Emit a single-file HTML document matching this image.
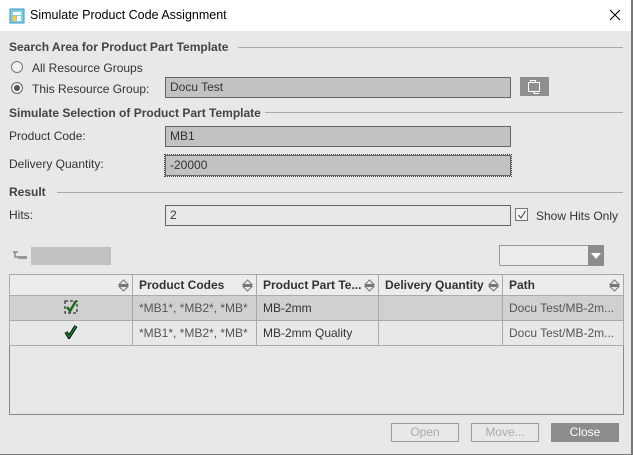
<!DOCTYPE html>
<html><head><style>
*{margin:0;padding:0;box-sizing:border-box}
body{width:633px;height:455px;overflow:hidden;background:#e8e8e8;font-family:"Liberation Sans",sans-serif;font-size:12px;color:#333;position:relative}
.a{position:absolute;white-space:nowrap}
.b{font-weight:bold;color:#444}
.line{position:absolute;height:1px;background:#aaa}
.f{position:absolute;background:#c2c2c2;border:1px solid #666;padding:2px 4px;line-height:14px}
.radio{position:absolute;width:12px;height:12px;border:1px solid #777;border-radius:50%;background:#f2f2f2}
.btn{position:absolute;width:68px;height:19px;border:1px solid #999;color:#aaa;text-align:center;line-height:17px}
table{position:absolute;left:9px;top:274px;border-collapse:collapse;font-size:12px}
td,th{border:1px solid #aaa;height:25px;padding:0 6px;white-space:nowrap;overflow:hidden}
th{height:21px;text-align:left;color:#333;position:relative;background:#ececec}
.s{position:absolute;right:3px;top:4px}
</style></head><body>
<div class="a" style="left:0;top:0;width:633px;height:31px;background:#fff"></div>
<div class="a" style="left:631px;top:0;width:2px;height:455px;background:#777"></div>
<div class="a" style="left:0;top:454px;width:633px;height:1px;background:#777"></div>
<svg class="a" style="left:9px;top:8px" width="16" height="16"><rect x="1" y="1" width="14" height="14" fill="#8cd" stroke="#39c"/><rect x="4" y="4" width="8" height="3" fill="#fff"/><rect x="4" y="8" width="3" height="5" fill="#fc3"/><rect x="8" y="8" width="4" height="5" fill="#fff"/></svg>
<div class="a" style="left:30px;top:8px;font-size:12.5px;color:#000">Simulate Product Code Assignment</div>
<svg class="a" style="left:609px;top:9px" width="12" height="12"><path d="M1 1L11 11M11 1L1 11" stroke="#000" stroke-width="1.1"/></svg>

<div class="a b" style="left:9px;top:40px">Search Area for Product Part Template</div>
<div class="line" style="left:238px;top:47px;width:385px"></div>
<div class="radio" style="left:11px;top:61px"></div>
<div class="a" style="left:32px;top:61px">All Resource Groups</div>
<div class="radio" style="left:11px;top:82px;border-color:#666"><div style="position:absolute;left:2px;top:2px;width:6px;height:6px;border-radius:50%;background:#555"></div></div>
<div class="a" style="left:32px;top:82px">This Resource Group:</div>
<div class="f" style="left:165px;top:77px;width:346px;height:21px">Docu Test</div>
<div class="a" style="left:520px;top:77px;width:29px;height:19px;background:#8f8f8f"></div>
<svg class="a" style="left:526px;top:78px" width="18" height="17"><path d="M2.5 4.5h11v9h-11zM4.5 4.5v-2h5v2M8 13.5v2h5" fill="none" stroke="#fff"/></svg>

<div class="a b" style="left:9px;top:106px">Simulate Selection of Product Part Template</div>
<div class="line" style="left:265px;top:112px;width:358px"></div>
<div class="a" style="left:9px;top:129px">Product Code:</div>
<div class="f" style="left:165px;top:126px;width:346px;height:21px">MB1</div>
<div class="a" style="left:9px;top:157px">Delivery Quantity:</div>
<div class="a" style="left:164px;top:154px;width:348px;height:23px;border:1px dotted #444"></div>
<div class="f" style="left:165px;top:155px;width:346px;height:21px">-20000</div>

<div class="a b" style="left:9px;top:185px">Result</div>
<div class="line" style="left:57px;top:192px;width:566px"></div>
<div class="a" style="left:9px;top:208px">Hits:</div>
<div class="f" style="left:165px;top:205px;width:346px;height:21px;background:#e8e8e8">2</div>
<div class="a" style="left:515px;top:208px;width:13px;height:13px;border:1px solid #777;background:#f4f4f4"></div>
<svg class="a" style="left:516px;top:209px" width="12" height="12"><path d="M2.5 6l2.5 3 4.5-7" fill="none" stroke="#444" stroke-width="1.1"/></svg>
<div class="a" style="left:536px;top:209px">Show Hits Only</div>

<svg class="a" style="left:12px;top:250px" width="16" height="10"><path d="M1 2h5M3 2v5h9" fill="none" stroke="#777" stroke-width="1.2"/><rect x="6" y="6" width="9" height="3" fill="#999"/></svg>
<div class="a" style="left:31px;top:247px;width:80px;height:18px;background:#c2c2c2"></div>
<div class="a" style="left:499px;top:245px;width:105px;height:21px;border:1px solid #999;background:#ececec"></div>
<div class="a" style="left:588px;top:245px;width:16px;height:21px;background:#8c8c8c"></div>
<svg class="a" style="left:591px;top:252px" width="10" height="8"><path d="M0 1h10L5 7z" fill="#fff"/></svg>

<div class="a" style="left:9px;top:274px;width:615px;height:141px;border:1px solid #888;background:#e8e8e8"></div>
<table>
<tr><th style="width:123px"><svg class="s" width="11" height="13"><path d="M1 5.5L5.5 1 10 5.5zM1 7.5L5.5 12 10 7.5z" fill="none" stroke="#777"/><path d="M1 6.5h9" stroke="#777"/></svg></th><th style="width:124px">Product Codes<svg class="s" width="11" height="13"><path d="M1 5.5L5.5 1 10 5.5zM1 7.5L5.5 12 10 7.5z" fill="none" stroke="#777"/><path d="M1 6.5h9" stroke="#777"/></svg></th><th style="width:122px">Product Part Te...<svg class="s" width="11" height="13"><path d="M1 5.5L5.5 1 10 5.5zM1 7.5L5.5 12 10 7.5z" fill="none" stroke="#777"/><path d="M1 6.5h9" stroke="#777"/></svg></th><th style="width:124px">Delivery Quantity<svg class="s" width="11" height="13"><path d="M1 5.5L5.5 1 10 5.5zM1 7.5L5.5 12 10 7.5z" fill="none" stroke="#777"/><path d="M1 6.5h9" stroke="#777"/></svg></th><th style="width:121px">Path<svg class="s" width="11" height="13"><path d="M1 5.5L5.5 1 10 5.5zM1 7.5L5.5 12 10 7.5z" fill="none" stroke="#777"/><path d="M1 6.5h9" stroke="#777"/></svg></th></tr>
<tr style="background:#d0d0d0"><td style="text-align:center"><svg width="16" height="14"><rect x="2" y="1" width="12" height="12" fill="none" stroke="#111" stroke-dasharray="3 2"/><path d="M4 7l3 4 6-10" fill="none" stroke="#1a6b1a" stroke-width="2.5"/></svg></td><td style="color:#555">*MB1*, *MB2*, *MB*</td><td>MB-2mm</td><td></td><td style="color:#555">Docu Test/MB-2m...</td></tr>
<tr><td style="text-align:center"><svg width="16" height="14"><path d="M3 7l3 5 7-11" fill="none" stroke="#000" stroke-width="3.4"/><path d="M3 7l3 5 7-11" fill="none" stroke="#1a8a2a" stroke-width="1.6"/></svg></td><td style="color:#555">*MB1*, *MB2*, *MB*</td><td>MB-2mm Quality</td><td></td><td style="color:#555">Docu Test/MB-2m...</td></tr>
</table>

<div class="btn" style="left:391px;top:423px">Open</div>
<div class="btn" style="left:471px;top:423px">Move...</div>
<div class="btn" style="left:551px;top:423px;background:#8c8c8c;border-color:#8c8c8c;color:#fff">Close</div>
</body></html>
